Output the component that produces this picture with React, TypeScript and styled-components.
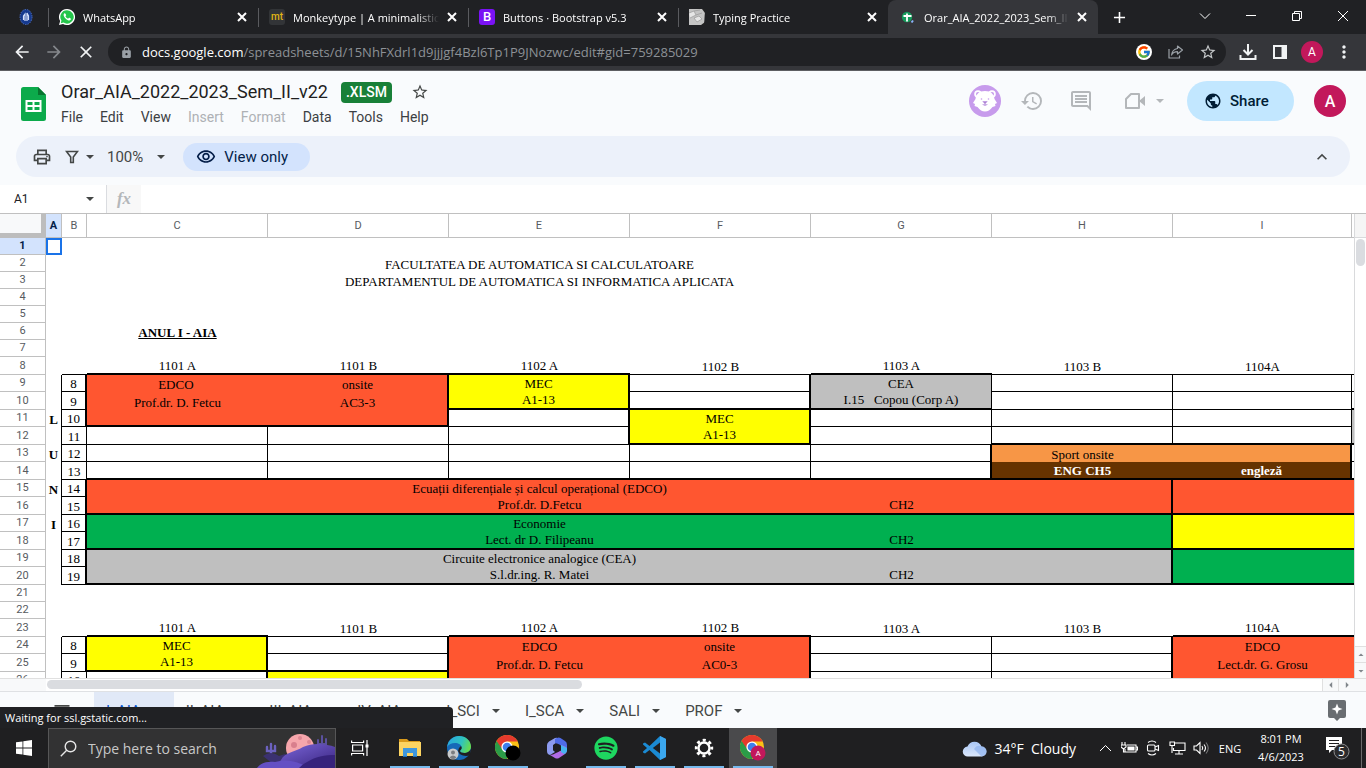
import React from 'react';
import styled, { createGlobalStyle, css } from 'styled-components';
import {
  MdArrowBack, MdArrowForward, MdClose, MdLock, MdStarBorder, MdMoreVert, MdAdd, MdHistory,
  MdOutlineInsertComment, MdPublic, MdOutlinePrint, MdArrowDropDown, MdArrowDropUp, MdArrowLeft, MdArrowRight,
  MdOutlineVisibility, MdKeyboardArrowUp, MdMenu,
} from 'react-icons/md';
import { FcGoogle } from 'react-icons/fc';
import { FaSpotify } from 'react-icons/fa';

const UI = '"Open Sans", "Noto Sans", sans-serif';
const DOC = 'Roboto, "Liberation Sans", sans-serif';
const SERIF = '"Liberation Serif", serif';

const GlobalStyle = createGlobalStyle`
  * { box-sizing: border-box; }
  body { margin: 0; overflow: hidden; }
  button, input { font: inherit; color: inherit; border: 0; padding: 0; margin: 0; background: none; }
  svg { display: block; flex: none; }
`;

const Shell = styled.div`
  display: flex;
  flex-direction: column;
  height: 100vh;
  background: #f9fbfd;
  font-family: ${DOC};
`;

/* ---------- browser frame ---------- */

const TabStrip = styled.div`
  display: flex;
  flex: none;
  height: 34px;
  background: #202124;
  color: #fff;
  font-family: ${UI};
  font-size: 11px;
`;
const PinnedTab = styled.button`
  width: 48px;
  padding: 0 6px 0 18px;
`;
const BrowserTab = styled.div<{ $active?: boolean }>`
  display: flex;
  align-items: center;
  flex: 0 1 210px;
  min-width: 0;
  padding: 0 11px;
  gap: 8px;
  position: relative;
  ${p => p.$active
    ? css`
        background: #35363a;
        border-radius: 8px 8px 0 0;
        padding-left: 12px;
      `
    : css`
        &::before {
          content: '';
          position: absolute;
          left: 0;
          top: 8px;
          height: 19px;
          width: 1px;
          background: #5a5b5f;
        }
      `}
`;
const TabTitle = styled.span`
  flex: 1;
  overflow: hidden;
  white-space: nowrap;
  mask-image: linear-gradient(90deg, #000 85%, transparent);
`;
const IconButton = styled.button<{ $w?: number; $color?: string }>`
  display: flex;
  align-items: center;
  justify-content: center;
  flex: none;
  width: ${p => p.$w ?? 32}px;
  color: ${p => p.$color ?? 'inherit'};
`;
const Spacer = styled.div`
  flex: 1;
`;
const AddressRow = styled.div`
  display: flex;
  flex: none;
  align-items: center;
  height: 37px;
  padding: 0 6px;
  background: #35363a;
  border-bottom: 1px solid #5d5e62;
  color: #f1f3f4;
  font-family: ${UI};
`;
const Omnibox = styled.div`
  display: flex;
  align-items: center;
  flex: 1;
  height: 28px;
  margin: 0 6px;
  padding: 0 2px 0 12px;
  border-radius: 14px;
  background: #202124;
  font-size: 13px;
  color: #9aa0a6;
`;
const UrlText = styled.a`
  flex: 1;
  margin-left: 9px;
  overflow: hidden;
  white-space: nowrap;
  color: #8d9196;
  text-decoration: none;
  b {
    font-weight: 400;
    color: #fff;
  }
`;
const Avatar = styled.button<{ $size: number }>`
  flex: none;
  width: ${p => p.$size}px;
  height: ${p => p.$size}px;
  border-radius: 50%;
  background: #c2185b;
  color: #fff;
  font-family: ${DOC};
  font-size: ${p => (p.$size > 24 ? 16 : 12)}px;
  font-weight: ${p => (p.$size > 24 ? 500 : 400)};
`;

/* ---------- document header ---------- */

const DocHeader = styled.header`
  display: flex;
  flex: none;
  height: 65px;
  padding: 10px 20px 0 21px;
`;
const LogoBox = styled.div`
  padding-top: 6px;
`;
const DocInfo = styled.div`
  margin-left: 7px;
`;
const TitleRow = styled.div`
  display: flex;
  align-items: center;
  height: 22px;
  padding-left: 8px;
`;
const DocTitle = styled.h1`
  margin: 0;
  font-size: 18px;
  line-height: 22px;
  font-weight: 400;
  color: #1f1f1f;
`;
const FileBadge = styled.span`
  margin: 0 16px 0 13px;
  padding: 0 5px;
  border-radius: 4px;
  background: #188038;
  color: #fff;
  font-size: 14px;
  font-weight: 500;
  line-height: 21px;
`;
const Menus = styled.nav`
  display: flex;
  gap: 1px;
  height: 28px;
`;
const MenuItem = styled.button`
  padding: 0 8px;
  font-size: 14px;
  color: #3c4043;
  &:disabled { color: #aeb1b5; }
`;
const HeaderActions = styled.div`
  display: flex;
  align-items: center;
  height: 40px;
  color: #b4b7ba;
`;
const ShareButton = styled.button`
  display: flex;
  align-items: center;
  gap: 8px;
  width: 107px;
  height: 40px;
  margin: 0 20px 0 22px;
  padding-left: 17px;
  border-radius: 20px;
  background: #c2e7ff;
  color: #001d35;
  font-size: 15px;
  font-weight: 500;
`;
const ToolPill = styled.div`
  display: flex;
  flex: none;
  align-items: center;
  height: 41px;
  margin: 0 16px 8px;
  padding: 0 12px 0 10px;
  border-radius: 21px;
  background: #ecf1fa;
  color: #444746;
  font-size: 15px;
`;
const ZoomButton = styled.button`
  display: flex;
  align-items: center;
  gap: 13px;
  margin: 0 17px 0 12px;
`;
const ViewOnly = styled.button`
  display: flex;
  align-items: center;
  gap: 8px;
  width: 127px;
  height: 28px;
  padding-left: 13px;
  border-radius: 14px;
  background: #d3e3fd;
  color: #041e49;
`;
const FormulaBar = styled.div`
  display: flex;
  flex: none;
  align-items: center;
  height: 29px;
  background: #fff;
  border-bottom: 1px solid #c0c0c0;
`;
const NameBox = styled.input`
  width: 78px;
  padding-left: 14px;
  font-size: 12px;
  color: #202124;
`;
const FxCell = styled.label`
  display: flex;
  align-items: center;
  justify-content: center;
  width: 35px;
  height: 28px;
  margin-left: 4px;
  border-left: 1px solid #dadce0;
  background: #f8f8f8;
  font: italic 700 17px ${SERIF};
  color: #b4b7ba;
`;
const FormulaInput = styled.input`
  flex: 1;
  height: 26px;
  padding: 0 8px;
`;

/* ---------- sheet ---------- */

const SheetArea = styled.main`
  display: flex;
  flex: 1 1 0;
  min-height: 0;
  background: #fff;
`;
const Viewport = styled.div`
  flex: 1;
  min-width: 0;
  overflow: hidden;
`;
const Sheet = styled.table`
  table-layout: fixed;
  width: 1533px;
  border-collapse: separate;
  border-spacing: 0;
`;
const headerCell = css<{ $on?: boolean }>`
  padding: 0;
  border: 0 solid #c0c0c0;
  border-right-width: 1px;
  border-bottom-width: 1px;
  background: ${p => (p.$on ? '#d3e3fd' : '#fff')};
  color: ${p => (p.$on ? '#041e49' : '#575b5f')};
  font-size: 11px;
  font-weight: ${p => (p.$on ? 700 : 400)};
  line-height: 14px;
`;
const ColHead = styled.th<{ $on?: boolean }>`
  ${headerCell}
  height: 24px;
`;
const RowHead = styled.th<{ $on?: boolean }>`
  ${headerCell}
`;
const Corner = styled.th`
  height: 24px;
  padding: 0;
  border: 0 solid #bdbdbd;
  border-width: 0 5px 5px 0;
  background: #f8f9fa;
`;
const Row = styled.tr<{ $h: number }>`
  height: ${p => p.$h}px;
`;
interface CellLook {
  $bg?: string;
  $color?: string;
  $bold?: boolean;
  $right: number;
  $bottom: number;
  $selected?: boolean;
}
const Cell = styled.td<CellLook>`
  padding: 0;
  vertical-align: bottom;
  border: 0 solid #000;
  border-right-width: ${p => p.$right}px;
  border-bottom-width: ${p => p.$bottom}px;
  background: ${p => p.$bg ?? 'transparent'};
  color: ${p => p.$color ?? '#000'};
  font-family: ${SERIF};
  font-size: 13px;
  font-weight: ${p => (p.$bold ? 700 : 400)};
  ${p => p.$selected && css`
    outline: 2px solid #1a73e8;
    outline-offset: -2px;
  `}
`;
const CellLine = styled.div<{ $tall?: boolean }>`
  display: flex;
  justify-content: center;
  height: ${p => (p.$tall ? 16 : 15)}px;
  line-height: ${p => (p.$tall ? 16 : 15)}px;
  white-space: pre;
`;
const Underlined = styled.u`
  font-weight: 700;
`;

const VScroll = styled.div`
  display: flex;
  flex: none;
  flex-direction: column;
  width: 12px;
  border-left: 1px solid #d9dadc;
`;
const VScrollHead = styled.div`
  height: 24px;
  background: #f5f5f5;
  border-bottom: 1px solid #d9dadc;
`;
const VThumb = styled.div`
  height: 27px;
  margin: 1px;
  border-radius: 5px;
  background: #dadce0;
`;
const ScrollStep = styled.button<{ $vertical?: boolean }>`
  display: flex;
  align-items: center;
  justify-content: center;
  flex: none;
  width: ${p => (p.$vertical ? 11 : 16)}px;
  height: ${p => (p.$vertical ? 16 : 12)}px;
  border: 0 solid #e0e0e0;
  border-width: ${p => (p.$vertical ? '1px 0 0' : '0 0 0 1px')};
  background: #f8f9fa;
  color: #80868b;
`;
const HScroll = styled.div`
  display: flex;
  flex: none;
  height: 13px;
  border-top: 1px solid #e0e0e0;
  background: #fff;
`;
const HScrollEdge = styled.div<{ $w: number }>`
  width: ${p => p.$w}px;
  background: #f8f9fa;
`;
const HTrack = styled.div`
  flex: 1;
  padding: 1px;
`;
const HThumb = styled.div`
  width: 42%;
  height: 9px;
  border-radius: 5px;
  background: #dadce0;
`;

/* ---------- sheet tabs ---------- */

const SheetTabs = styled.footer`
  position: relative;
  display: flex;
  flex: none;
  height: 37px;
  padding: 0 18px 0 50px;
  border-top: 1px solid #dfe1e4;
`;
const TabList = styled.div`
  display: flex;
  flex: 1;
  margin-left: 20px;
`;
const SheetTab = styled.button<{ $active?: boolean }>`
  display: flex;
  align-items: center;
  gap: 11px;
  padding: 2px 12px 0;
  font-size: 15px;
  color: ${p => (p.$active ? '#0b57d0' : '#444746')};
  background: ${p => (p.$active ? '#e1e9f7' : 'transparent')};
`;
const StatusBubble = styled.div`
  position: absolute;
  left: 0;
  bottom: 0;
  width: 453px;
  height: 21px;
  padding-left: 5px;
  border-radius: 0 4px 0 0;
  background: #202124;
  color: #fff;
  font: 11px/21px ${UI};
`;

/* ---------- taskbar ---------- */

const Taskbar = styled.div`
  display: flex;
  flex: none;
  height: 40px;
  background: #1f1f21;
  color: #fff;
  font-family: ${UI};
  font-size: 11px;
`;
const SearchBox = styled.label`
  display: flex;
  align-items: center;
  flex: none;
  width: 288px;
  padding-left: 11px;
  background: #323233;
  border: 1px solid #565657;
  border-bottom: 0;
  overflow: hidden;
`;
const SearchInput = styled.input`
  flex: 1;
  min-width: 0;
  margin-left: 11px;
  font-size: 14px;
  outline: 0;
  &::placeholder { color: #c8c8c8; opacity: 1; }
`;
const PinnedApps = styled.div`
  display: flex;
  gap: 1px;
  margin-left: 2px;
`;
const TaskButton = styled.button<{ $open?: boolean; $active?: boolean }>`
  display: flex;
  align-items: center;
  justify-content: center;
  flex: none;
  width: 48px;
  position: relative;
  background: ${p => (p.$active ? '#4a4a4c' : 'transparent')};
  ${p => p.$open && css`
    &::after {
      content: '';
      position: absolute;
      bottom: 0;
      left: 4px;
      right: 4px;
      height: 2px;
      background: #76b9ed;
    }
  `}
`;
const Weather = styled.button`
  display: flex;
  align-items: center;
  gap: 8px;
  margin-right: 17px;
  font-size: 14px;
  white-space: pre;
`;
const Clock = styled.div`
  width: 68px;
  padding-top: 2px;
  line-height: 18px;
  text-align: center;
`;
const Peek = styled.button`
  width: 5px;
  border-left: 1px solid #6a6a6b;
`;

/* ---------- small drawings ---------- */

const Caret = ({ color = 'currentColor' }: { color?: string }) => (
  <svg width="10" height="6" viewBox="0 0 10 6"><path d="M1 1h8L5 5z" fill={color} /></svg>
);

const CrestIcon = () => (
  <svg width="16" height="18" viewBox="0 0 16 18">
    <ellipse cx="8" cy="9" rx="6" ry="7.500" fill="#163a8f" stroke="#4d70c4" strokeWidth="1" strokeDasharray="1.5 1" />
    <path d="M5.500 12V8l1.500-2v7M9 13V5l1.500 3v4" stroke="#d5e0fa" strokeWidth="1.200" fill="none" />
  </svg>
);
const WhatsAppIcon = () => (
  <svg width="16" height="16" viewBox="0 0 32 32">
    <path d="M16 0a16 16 0 0 0-13.700 24.200L0 32l8-2.200A16 16 0 1 0 16 0z" fill="#fff" />
    <path d="M16 2.600a13.300 13.300 0 0 0-11.200 20.500L3.600 28.400l5.400-1.300A13.300 13.300 0 1 0 16 2.600z" fill="#25c54b" />
    <path d="M11.500 8.500c-.6 0-2.700 1.300-2.200 4.200.8 4.300 6 9.500 10.300 10.300 2.500.4 4.300-1.500 4.300-3.300 0-.6-3.300-2.200-3.900-2-.6.200-1.300 1.900-1.900 1.800-1.700-.3-4.700-3.200-5.100-4.800-.1-.6 1.300-1.400 1.400-2 .1-.7-1.600-4.200-2.900-4.200z" fill="#fff" />
  </svg>
);
const LetterIcon = styled.span<{ $bg: string; $fg: string; $size: number }>`
  flex: none;
  width: 16px;
  height: 16px;
  border-radius: 3px;
  background: ${p => p.$bg};
  color: ${p => p.$fg};
  font: 500 ${p => p.$size}px/16px ${DOC};
  text-align: center;
`;
const TypingIcon = () => (
  <svg width="16" height="16" viewBox="0 0 16 16">
    <path d="M0 0h14l2 2-1 14H0z" fill="#c4c4c4" />
    <path d="M0 4l5-2 2 4-6 3M7 6l6-2M5 2l6-1M5 9l5-2 3 3-5 3z" stroke="#989898" strokeWidth=".7" fill="#e6e6e6" />
    <path d="M13 0h3v4zM12 16l4-3v3z" fill="#222" />
  </svg>
);
const SheetsLoadingIcon = () => (
  <svg width="16" height="16" viewBox="0 0 16 16">
    <circle cx="7" cy="8" r="5.200" fill="#159a5b" />
    <path d="M3.500 7h8M7 4.500v8" stroke="#fff" strokeWidth="1.800" />
    <path d="M11.500 13.500l1.500-2" stroke="#8ab4f8" strokeWidth="2" />
  </svg>
);
const SheetsLogo = () => (
  <svg width="25" height="34" viewBox="0 0 25 34">
    <path d="M2.500 0H17l8 8v23.500a2.500 2.500 0 0 1-2.500 2.500h-20A2.500 2.500 0 0 1 0 31.500v-29A2.500 2.500 0 0 1 2.500 0z" fill="#0caa4b" />
    <path d="M17 0l8 8h-8z" fill="#07752f" />
    <path d="M4.500 13h16v12h-16zm2 2v3h5v-3zm7 0v3h5v-3zm-7 5v3h5v-3zm7 0v3h5v-3z" fill="#fff" fillRule="evenodd" />
  </svg>
);
const BearIcon = () => (
  <svg width="32" height="32" viewBox="0 0 32 32">
    <circle cx="16" cy="16" r="16" fill="#c79bec" />
    <circle cx="9" cy="9" r="3.800" fill="#fff" /><circle cx="23" cy="9" r="3.800" fill="#fff" />
    <circle cx="9" cy="9" r="2" fill="#c79bec" /><circle cx="23" cy="9" r="2" fill="#c79bec" />
    <path d="M16 6c6 0 9 3.500 9.500 8L28 18l-2 1 .5 2-3 1C21 25 19 26.500 16 26.500S11 25 8.500 22l-3-1 .5-2-2-1 2.500-4C7 9.500 10 6 16 6z" fill="#fff" />
    <circle cx="12.500" cy="14" r=".8" fill="#c79bec" /><circle cx="19.500" cy="14" r=".8" fill="#c79bec" />
    <path d="M13.800 16.500h4.400L16 18.800zM16 18v2M13.500 19.500l2.500 1 2.500-1" fill="#a77fcb" stroke="#b88be0" strokeWidth=".6" />
  </svg>
);
const MeetIcon = () => (
  <svg width="22" height="18" viewBox="0 0 22 18">
    <path d="M7 2h8v14H2V7z" fill="none" stroke="currentColor" strokeWidth="2" strokeLinejoin="round" />
    <path d="M15 9l6-5v10z" fill="currentColor" />
  </svg>
);
const FilterIcon = () => (
  <svg width="14" height="14" viewBox="0 0 14 14">
    <path d="M1.500 1.500h11L8.300 7v5.500H5.700V7z" fill="none" stroke="currentColor" strokeWidth="1.600" />
  </svg>
);
const OmniShareIcon = () => (
  <svg width="16" height="14" viewBox="0 0 16 14" fill="none" stroke="#9aa0a6" strokeWidth="1.200">
    <path d="M1 4v9h10.500v-2.500M9.500 1l5 4-5 4V6.700C6.500 6.700 4.500 8 3.500 10c.5-3.500 2.500-6 6-6.500z" strokeLinejoin="round" />
  </svg>
);
const DownloadIcon = () => (
  <svg width="18" height="16" viewBox="0 0 18 16" fill="none" stroke="#f1f3f4" strokeWidth="2">
    <path d="M9 0v10M4.500 6L9 10.500 13.500 6M1.500 11v4h15v-4" />
  </svg>
);
const SidePanelIcon = () => (
  <svg width="14" height="14" viewBox="0 0 14 14"><path d="M1 1h12v12H1z" fill="none" stroke="#f1f3f4" strokeWidth="2" /><path d="M8.500 1H13v12H8.500z" fill="#f1f3f4" /></svg>
);
const ThinIcon = ({ d, size = 12, w = 1 }: { d: string; size?: number; w?: number }) => (
  <svg width={size} height={size} viewBox={`0 0 ${size} ${size}`} fill="none" stroke="currentColor" strokeWidth={w}><path d={d} /></svg>
);
const ExploreIcon = () => (
  <svg width="18" height="21" viewBox="0 0 18 21">
    <path d="M2 0h14a2 2 0 0 1 2 2v14a2 2 0 0 1-2 2h-4l-3 3-3-3H2a2 2 0 0 1-2-2V2a2 2 0 0 1 2-2z" fill="#696d71" />
    <path d="M9 3.500l1.500 4L14.500 9l-4 1.500L9 14.500l-1.500-4-4-1.500 4-1.500z" fill="#fff" />
  </svg>
);
const WindowsIcon = () => (
  <svg width="16" height="16" viewBox="0 0 16 16"><path d="M0 2.300l6.500-.9v6.200H0zM7.300 1.300L16 0v7.600H7.300zM0 8.400h6.500v6.200L0 13.700zM7.300 8.400H16V16l-8.700-1.200z" fill="#fff" /></svg>
);
const SearchIcon = () => (
  <svg width="17" height="17" viewBox="0 0 17 17" fill="none" stroke="#e6e6e6" strokeWidth="1.400"><circle cx="10.500" cy="6.500" r="5.300" /><path d="M6.700 10.300L.8 16.200" /></svg>
);
const DesertArt = () => (
  <svg width="80" height="39" viewBox="0 0 80 39">
    <defs>
      <linearGradient id="hill" x1="0" y1="0" x2="1" y2="1"><stop offset="0" stopColor="#7d69dc" /><stop offset="1" stopColor="#38237e" /></linearGradient>
    </defs>
    <circle cx="45" cy="19" r="14" fill="#f6a6ac" />
    <circle cx="39" cy="16" r="3" fill="#d97f8d" /><circle cx="49" cy="22" r="3.500" fill="#dd8793" /><circle cx="45" cy="9" r="2" fill="#dd8793" /><circle cx="54" cy="13" r="2" fill="#dd8793" />
    <path d="M16 27V15M12 18v4h4M20 17v5h-4" stroke="#6c62c0" strokeWidth="2.400" fill="none" strokeLinecap="round" />
    <path d="M67 20V7M63 11v4h4M71 10v5h-4" stroke="#5b519f" strokeWidth="2" fill="none" strokeLinecap="round" />
    <path d="M8 27q8-6 16 0l6-2 6 4-18 6z" fill="#3b3170" />
    <path d="M26 31c4-8 14-8 22-13 10-5 24-3 32 0v21H20z" fill="url(#hill)" />
    <path d="M2 39c4-6 12-7 18-6 12-4 24 0 34 6z" fill="#6450c4" />
    <path d="M44 39c8-8 22-14 36-13v13z" fill="#36237c" />
  </svg>
);
const TaskViewIcon = () => (
  <svg width="18" height="16" viewBox="0 0 18 16" fill="none" stroke="#fff" strokeWidth="1.200">
    <path d="M.600.500v2h12v-2M1.600 5h10v6h-10zM.600 15.500v-2h12v2M16 0v16" /><path d="M14.500 6h3" strokeWidth="3" />
  </svg>
);
const FolderIcon = () => (
  <svg width="22" height="20" viewBox="0 0 22 20">
    <path d="M0 1h8l2 2h11v15H0z" fill="#d99a1b" /><path d="M0 4h22v14H0z" fill="#fcd462" />
    <path d="M4 10h14v9h-4v-4H8v4H4z" fill="#3f97dd" /><path d="M4 18h4v1H4zM14 18h4v1h-4z" fill="#1d72b8" />
  </svg>
);
const EdgeIcon = () => (
  <svg width="24" height="24" viewBox="0 0 24 24">
    <defs>
      <linearGradient id="edge" x1="0" y1="0.200" x2="1" y2="0.500"><stop offset="0" stopColor="#2aa6e0" /><stop offset=".6" stopColor="#2fc3bf" /><stop offset="1" stopColor="#66dc4f" /></linearGradient>
    </defs>
    <circle cx="12" cy="12" r="12" fill="#1669b8" />
    <path d="M.200 11C1 4 6 0 12 0c7 0 12 5 12 10.500 0 4-3 6.500-6.500 6.500-2.500 0-4.500-1-4.500-2 0-.7 1.500-1.500 1.500-3.500C14.500 8.500 11.500 7 8 7S1.500 8.500.200 11z" fill="url(#edge)" />
    <path d="M13 15c0 1 2 2 4.500 2 2.500 0 5-1.300 6.500-4l-1 6q-3 1.500-7 .5T11 15q0-3 3-5c2 3-1 4-1 5z" fill="#1f1f21" />
    <circle cx="6" cy="18" r="5.500" fill="#c8cacc" /><circle cx="6" cy="16.500" r="2" fill="#7b7d80" /><path d="M2.500 21.500q3.500-4 7 0-3.500 3-7 0z" fill="#7b7d80" />
  </svg>
);
const ChromeIcon = ({ badge }: { badge?: string }) => (
  <svg width="26" height="26" viewBox="0 0 26 26">
    <circle cx="12" cy="12" r="12" fill="#fbc116" />
    <path d="M12 12L1.600 6A12 12 0 0 0 12 24l5-9z" fill="#2b9c48" />
    <path d="M12 6.500h10.700L22.400 6A12 12 0 0 0 1.600 6l5.500 8z" fill="#e53a2d" />
    <circle cx="12" cy="12" r="5.600" fill="#fff" /><circle cx="12" cy="12" r="4.300" fill="#3f7fec" />
    <circle cx="18" cy="18" r="7.500" fill={badge ? '#c2185b' : '#000'} />
    {badge && <text x="18" y="21" fontSize="8" fontFamily="Roboto" fill="#fff" textAnchor="middle">{badge}</text>}
  </svg>
);
const M365Icon = () => (
  <svg width="20" height="22" viewBox="0 0 20 22">
    <path d="M8 1L2 4.500Q0 6 0 8v6q0 3.500 3 4l5-3-2-2V8l7-5q-2-3-5-2z" fill="#8d9bf0" />
    <path d="M8 2q4-3 7 0l3 2q2 1 2 4v6l-7-3V8L8 6z" fill="#4f6be6" />
    <path d="M20 12q0 4-2 5l-6 4q-2 1-4 0l-5-3q3 0 6-2l5-3V8l5 2z" fill="#b06be6" />
    <path d="M14 8l6 3v3q-1 3-3 3l-3-2z" fill="#46b4ee" />
    <path d="M6.500 8.500L10 6.500l4 2v5L10 15.500l-3.500-2z" fill="#1f1f21" />
  </svg>
);
const VsCodeIcon = () => (
  <svg width="24" height="24" viewBox="0 0 24 24">
    <path d="M17 0l6 3v18l-6 3L6.500 14 2 17.500 0 16.500v-1L4 12 0 8.500v-1l2-1L6.500 10z" fill="#1b8ad3" />
    <path d="M17 6.500L9.800 12l7.200 5.500z" fill="#1f1f21" /><path d="M17 0l6 3v18l-6 3z" fill="#3ba7ee" />
  </svg>
);
const GearIcon = () => (
  <svg width="20" height="20" viewBox="0 0 20 20">
    <circle cx="10" cy="10" r="5.500" fill="none" stroke="#fff" strokeWidth="2.400" />
    <circle cx="10" cy="10" r="7.800" fill="none" stroke="#fff" strokeWidth="2.800" strokeDasharray="3.063 3.063" strokeDashoffset="1.530" />
  </svg>
);
const CloudIcon = () => (
  <svg width="25" height="17" viewBox="0 0 25 17">
    <defs><linearGradient id="cloud" x1="0" y1="0" x2="0" y2="1"><stop offset="0" stopColor="#a9c6f5" /><stop offset="1" stopColor="#dbe7fb" /></linearGradient></defs>
    <path d="M6 16.500a5 5 0 0 1-.5-10A7.500 7.500 0 0 1 19.500 6.500 5 5 0 0 1 19.500 16.500z" fill="url(#cloud)" />
    <path d="M12 9a6 6 0 0 1 7.500-2.500 5 5 0 0 1 0 10z" fill="#8fb2ee" opacity=".7" />
  </svg>
);
const BatteryIcon = () => (
  <svg width="17" height="14" viewBox="0 0 17 14" fill="none" stroke="#fff" strokeWidth="1.100">
    <path d="M6 4h9v7H4V8M15 6h1.500v3H15M1 1v3M4 1v3M0 4h5v2L2.500 8 0 6zM2.500 8v3H4" /><path d="M7 6h6v3H7z" fill="#fff" />
  </svg>
);
const MeetNowIcon = () => (
  <svg width="14" height="16" viewBox="0 0 14 16" fill="none" stroke="#fff" strokeWidth="1.100">
    <rect x="1.500" y="5" width="7.500" height="6" rx="1" /><path d="M9 7l3.500-1.500v5L9 9M2 2.500q4-3 8 0M2 13.500q4 3 8 0" />
  </svg>
);
const NetworkIcon = () => (
  <svg width="17" height="14" viewBox="0 0 17 14" fill="none" stroke="#fff" strokeWidth="1.100">
    <path d="M6 2h10v7.500H4.500V7M10 9.500V13M6 13h8M1 1h4.500v3.500H1zM3 4.500V12" />
  </svg>
);
const SpeakerIcon = () => (
  <svg width="17" height="14" viewBox="0 0 17 14" fill="none" stroke="#fff" strokeWidth="1.100">
    <path d="M1 5h2.500L7 1.500v11L3.500 9H1zM9 5q1.500 2 0 4M11 3.500q3 3.500 0 7" /><path d="M13 1.500q4.500 5.500 0 11" stroke="#77787a" />
  </svg>
);
const NoticeIcon = () => (
  <svg width="24" height="24" viewBox="0 0 24 24">
    <path d="M0 1h16v13H6l-3 3v-3H0z" fill="#fff" /><path d="M3 4.500h10M3 7.500h10M3 10.500h6" stroke="#1f1f21" />
    <circle cx="15.500" cy="15.500" r="7.500" fill="#2b2b2d" stroke="#8d8d8f" />
    <text x="15.500" y="20" fontSize="12" fontFamily="Open Sans" fill="#fff" textAnchor="middle">5</text>
  </svg>
);

/* ---------- timetable data ---------- */

const RED = '#ff5630';
const YELLOW = '#ffff00';
const GREY = '#bfbfbf';
const GREEN = '#00b050';
const COLS = ['A', 'B', 'C', 'D', 'E', 'F', 'G', 'H', 'I', 'J'];
const COL_WIDTHS = [16, 25, 181, 181, 181, 181, 181, 181, 179, 181];
const ROW_HEIGHTS = [17, 17, 17, 17, 17, 17, 17, 18, 17, 18, 17, 18, 17, 18, 17, 18, 17, 18, 17, 18, 17, 17, 18, 17, 18, 17];

interface CellData {
  lines?: string[];
  bg?: string;
  color?: string;
  bold?: boolean;
  underline?: boolean;
  right?: number;
  bottom?: number;
  span?: number;
}
const cells: Record<string, CellData> = {};
const put = (refs: string, data: CellData) =>
  refs.split(' ').forEach(ref => { cells[ref] = { ...cells[ref], ...data }; });
const block = (cols: string, from: number, to: number, data: CellData) => {
  for (let r = from; r <= to; r++) [...cols].forEach(c => put(c + r, data));
};

block('BCDEFGHIJ', 9, 14, { right: 1, bottom: 1 });
block('BCDEFGHIJ', 24, 26, { right: 1, bottom: 1 });
block('B', 15, 20, { right: 2, bottom: 1 });
block('A', 9, 20, { right: 1 });
block('A', 24, 26, { right: 1 });
put('B8 F8 H8 I8 J8 B23 D23 G23 H23', { bottom: 1 });
put('C8 D8 E8 G8 C23 E23 F23 I23 J23', { bottom: 2 });

put('E2', { lines: ['FACULTATEA DE AUTOMATICA SI CALCULATOARE'] });
put('E3', { lines: ['DEPARTAMENTUL DE AUTOMATICA SI INFORMATICA APLICATA'] });
put('C6', { lines: ['ANUL I - AIA'], underline: true });
['1101 A', '1101 B', '1102 A', '1102 B', '1103 A', '1103 B', '1104A'].forEach((group, i) =>
  put(`${COLS[i + 2]}8 ${COLS[i + 2]}23`, { lines: [group] }));
for (let h = 8; h < 20; h++) put(`B${h + 1}`, { lines: [String(h)] });
for (let h = 8; h < 11; h++) put(`B${h + 16}`, { lines: [String(h)] });
[['A11', 'L'], ['A13', 'U'], ['A15', 'N'], ['A17', 'I'], ['A26', 'M']].forEach(([ref, letter]) =>
  put(ref, { lines: [letter], bold: true }));

block('B', 9, 11, { right: 2 });
block('C', 9, 11, { bg: RED, right: 0, bottom: 0 });
block('D', 9, 11, { bg: RED, right: 2, bottom: 0 });
put('C11 D11', { bottom: 2 });
put('C9', { lines: ['EDCO '] });
put('C10', { lines: ['Prof.dr. D. Fetcu'] });
put('D9', { lines: ['onsite'] });
put('D10', { lines: ['AC3-3'] });
put('E9', { lines: ['MEC', 'A1-13'], bg: YELLOW, span: 2, right: 2, bottom: 2 });
put('F9 F10 E11 E12 F11', { right: 2 });
put('F10', { bottom: 2 });
put('F11', { lines: ['MEC', 'A1-13'], bg: YELLOW, span: 2, bottom: 2 });
put('G9', { lines: ['CEA', 'I.15   Copou (Corp A)'], bg: GREY, span: 2, bottom: 2 });
put('H12 I12', { bottom: 2 });
put('G13 G14', { right: 2 });
put('H13 I13', { bg: '#f79646', bottom: 0, right: 0 });
put('H14 I14', { bg: '#663300', color: '#fff', bold: true, right: 0 });
put('I13 I14', { right: 2 });
put('H13', { lines: ['Sport onsite'] });
put('H14', { lines: ['ENG CH5'] });
put('I14', { lines: ['engleză'] });
put('J10', { bottom: 2 });
put('J11 J12', { bg: GREY, bottom: 0 });
put('J12', { bottom: 2 });
block('CDEFGHIJ', 14, 14, { bottom: 2 });

([
  [15, RED, RED, 'Ecuații diferențiale și calcul operațional (EDCO)', 'Prof.dr. D.Fetcu'],
  [17, GREEN, YELLOW, 'Economie', 'Lect. dr D. Filipeanu'],
  [19, GREY, GREEN, 'Circuite electronice analogice (CEA)', 'S.l.dr.ing. R. Matei'],
] as [number, string, string, string, string][]).forEach(([row, bg, nextBg, course, teacher]) => {
  [...'CDEFGH'].forEach(c => put(c + row, { bg, span: 2, bottom: 2 }));
  [...'IJ'].forEach(c => put(c + row, { bg: nextBg, span: 2, bottom: 2 }));
  put(`H${row}`, { right: 2 });
  put(`E${row}`, { lines: [course, teacher] });
  put(`G${row}`, { lines: ['', 'CH2'] });
});

put('B24 B25 D24 D25 D26 H24 H25 H26 C26', { right: 2 });
put('C24', { lines: ['MEC', 'A1-13'], bg: YELLOW, span: 2, right: 2, bottom: 2 });
put('D25', { bottom: 2 });
put('D26', { bg: YELLOW, lines: ['MEC'], bottom: 0 });
block('EI', 24, 26, { bg: RED, right: 0, bottom: 0 });
block('FJ', 24, 26, { bg: RED, right: 2, bottom: 0 });
put('E24 I24', { lines: ['EDCO'] });
put('E25', { lines: ['Prof.dr. D. Fetcu'] });
put('F24', { lines: ['onsite'] });
put('F25', { lines: ['AC0-3'] });
put('I25', { lines: ['Lect.dr. G. Grosu'] });

const isCovered = (col: string, row: number) => cells[`${col}${row - 1}`]?.span === 2;

const SheetCell = ({ col, row }: { col: string; row: number }) => {
  if (isCovered(col, row)) return null;
  const data = cells[`${col}${row}`] ?? {};
  return (
    <Cell
      rowSpan={data.span}
      $bg={data.bg}
      $color={data.color}
      $bold={data.bold}
      $right={data.right ?? 0}
      $bottom={data.bottom ?? 0}
      $selected={col === 'A' && row === 1}
    >
      {data.lines?.map((line, i) => (
        <CellLine key={i} $tall={data.span === 2}>
          {data.underline ? <Underlined>{line}</Underlined> : line}
        </CellLine>
      ))}
    </Cell>
  );
};

const Grid = () => (
  <Sheet>
    <colgroup>
      <col style={{ width: 46 }} />
      {COL_WIDTHS.map((w, i) => <col key={i} style={{ width: w }} />)}
    </colgroup>
    <thead>
      <tr>
        <Corner />
        {COLS.map(c => <ColHead key={c} scope="col" $on={c === 'A'}>{c === 'J' ? null : c}</ColHead>)}
      </tr>
    </thead>
    <tbody>
      {ROW_HEIGHTS.map((h, i) => (
        <Row key={i} $h={h}>
          <RowHead scope="row" $on={i === 0}>{i + 1}</RowHead>
          {COLS.map(c => <SheetCell key={c} col={c} row={i + 1} />)}
        </Row>
      ))}
    </tbody>
  </Sheet>
);

const browserTabs = [
  { title: 'WhatsApp', icon: <WhatsAppIcon /> },
  { title: 'Monkeytype | A minimalistic', icon: <LetterIcon $bg="#323437" $fg="#e2b714" $size={10}>mt</LetterIcon> },
  { title: 'Buttons · Bootstrap v5.3', icon: <LetterIcon $bg="#7a12f5" $fg="#fff" $size={13}>B</LetterIcon> },
  { title: 'Typing Practice', icon: <TypingIcon /> },
  { title: 'Orar_AIA_2022_2023_Sem_II', icon: <SheetsLoadingIcon />, active: true },
];
const menus = ['File', 'Edit', 'View', 'Insert', 'Format', 'Data', 'Tools', 'Help'];
const sheetNames = ['I_AIA', 'II_AIA', 'III_AIA', 'IV_AIA', 'I_SCI', 'I_SCA', 'SALI', 'PROF'];

export default function App() {
  return (
    <Shell>
      <GlobalStyle />
      <TabStrip>
        <PinnedTab aria-label="University"><CrestIcon /></PinnedTab>
        {browserTabs.map(t => (
          <BrowserTab key={t.title} $active={t.active}>
            {t.icon}
            <TabTitle>{t.title}</TabTitle>
            <IconButton $w={10} aria-label="Close tab"><ThinIcon d="M1 1l8 8M9 1l-8 8" size={10} w={2} /></IconButton>
          </BrowserTab>
        ))}
        <IconButton $w={42} aria-label="New tab"><MdAdd size={19} /></IconButton>
        <Spacer />
        <IconButton $w={46} aria-label="Search tabs"><ThinIcon d="M1 2.500l5 5 5-5" /></IconButton>
        <IconButton $w={46} aria-label="Minimize"><ThinIcon d="M1 4.500h10" /></IconButton>
        <IconButton $w={46} aria-label="Restore"><ThinIcon d="M1.500 2.500h7v7h-7zM3.500 2.500v-2h7v7h-2" /></IconButton>
        <IconButton $w={46} aria-label="Close"><ThinIcon d="M1 0l10 10M11 0L1 10" /></IconButton>
      </TabStrip>
      <AddressRow>
        <IconButton aria-label="Back"><MdArrowBack size={20} /></IconButton>
        <IconButton $color="#85888c" aria-label="Forward"><MdArrowForward size={20} /></IconButton>
        <IconButton aria-label="Stop"><MdClose size={20} /></IconButton>
        <Omnibox>
          <MdLock size={13} />
          <UrlText href="#"><b>docs.google.com</b>/spreadsheets/d/15NhFXdrl1d9jjjgf4Bzl6Tp1P9JNozwc/edit#gid=759285029</UrlText>
          <IconButton aria-label="Google">
            <svg width="16" height="16" viewBox="0 0 16 16"><circle cx="8" cy="8" r="8" fill="#fff" /><FcGoogle x="1" y="1" size={14} /></svg>
          </IconButton>
          <IconButton aria-label="Share page"><OmniShareIcon /></IconButton>
          <IconButton $color="#c4c7c9" aria-label="Bookmark"><MdStarBorder size={18} /></IconButton>
        </Omnibox>
        <IconButton aria-label="Downloads"><DownloadIcon /></IconButton>
        <IconButton aria-label="Side panel"><SidePanelIcon /></IconButton>
        <IconButton as="div"><Avatar $size={22}>A</Avatar></IconButton>
        <IconButton aria-label="More"><MdMoreVert size={20} /></IconButton>
      </AddressRow>

      <DocHeader>
        <LogoBox><SheetsLogo /></LogoBox>
        <DocInfo>
          <TitleRow>
            <DocTitle>Orar_AIA_2022_2023_Sem_II_v22</DocTitle>
            <FileBadge>.XLSM</FileBadge>
            <IconButton $w={24} $color="#444746" aria-label="Star"><MdStarBorder size={18} /></IconButton>
          </TitleRow>
          <Menus>
            {menus.map(m => <MenuItem key={m} disabled={m === 'Insert' || m === 'Format'}>{m}</MenuItem>)}
          </Menus>
        </DocInfo>
        <Spacer />
        <HeaderActions>
          <IconButton $w={64} aria-label="Anonymous viewer"><BearIcon /></IconButton>
          <IconButton $w={30} aria-label="History"><MdHistory size={24} /></IconButton>
          <IconButton $w={68} aria-label="Comments"><MdOutlineInsertComment size={24} /></IconButton>
          <IconButton $w={40} aria-label="Join a call"><MeetIcon /></IconButton>
          <Caret />
          <ShareButton><MdPublic size={18} />Share</ShareButton>
          <Avatar $size={32}>A</Avatar>
        </HeaderActions>
      </DocHeader>
      <ToolPill>
        <IconButton aria-label="Print"><MdOutlinePrint size={20} /></IconButton>
        <IconButton $w={27} aria-label="Filter"><FilterIcon /></IconButton>
        <Caret />
        <ZoomButton>100%<Caret /></ZoomButton>
        <ViewOnly><MdOutlineVisibility size={20} />View only</ViewOnly>
        <Spacer />
        <IconButton aria-label="Hide menus"><MdKeyboardArrowUp size={20} /></IconButton>
      </ToolPill>
      <FormulaBar>
        <NameBox aria-label="Name box" defaultValue="A1" />
        <IconButton $w={24} $color="#444746" aria-label="Named ranges"><Caret /></IconButton>
        <FxCell htmlFor="formula">fx</FxCell>
        <FormulaInput id="formula" />
      </FormulaBar>

      <SheetArea>
        <Viewport><Grid /></Viewport>
        <VScroll>
          <VScrollHead />
          <VThumb />
          <Spacer />
          <ScrollStep $vertical aria-label="Scroll up"><MdArrowDropUp size={12} /></ScrollStep>
          <ScrollStep $vertical aria-label="Scroll down"><MdArrowDropDown size={12} /></ScrollStep>
        </VScroll>
      </SheetArea>
      <HScroll>
        <HScrollEdge $w={46} />
        <HTrack><HThumb /></HTrack>
        <ScrollStep aria-label="Scroll left"><MdArrowLeft size={14} /></ScrollStep>
        <ScrollStep aria-label="Scroll right"><MdArrowRight size={14} /></ScrollStep>
        <HScrollEdge $w={12} />
      </HScroll>
      <SheetTabs>
        <IconButton $w={24} $color="#444746" aria-label="All sheets"><MdMenu size={20} /></IconButton>
        <TabList>
          {sheetNames.map((n, i) => <SheetTab key={n} $active={i === 0}>{n}<Caret /></SheetTab>)}
        </TabList>
        <IconButton $w={22} aria-label="Explore"><ExploreIcon /></IconButton>
        <StatusBubble role="status">Waiting for ssl.gstatic.com...</StatusBubble>
      </SheetTabs>

      <Taskbar>
        <IconButton $w={48} aria-label="Start"><WindowsIcon /></IconButton>
        <SearchBox>
          <SearchIcon />
          <SearchInput aria-label="Search" placeholder="Type here to search" />
          <DesertArt />
        </SearchBox>
        <TaskButton aria-label="Task view"><TaskViewIcon /></TaskButton>
        <PinnedApps>
          <TaskButton $open aria-label="Files"><FolderIcon /></TaskButton>
          <TaskButton $open aria-label="Edge"><EdgeIcon /></TaskButton>
          <TaskButton $open aria-label="Chrome"><ChromeIcon /></TaskButton>
          <TaskButton aria-label="Microsoft 365"><M365Icon /></TaskButton>
          <TaskButton $open aria-label="Spotify"><FaSpotify size={24} color="#1ed760" /></TaskButton>
          <TaskButton $open aria-label="Code"><VsCodeIcon /></TaskButton>
          <TaskButton $open aria-label="Settings"><GearIcon /></TaskButton>
          <TaskButton $open $active aria-label="Chrome profile"><ChromeIcon badge="A" /></TaskButton>
        </PinnedApps>
        <Spacer />
        <Weather><CloudIcon />34°F  Cloudy</Weather>
        <IconButton $w={24} aria-label="Hidden icons"><ThinIcon d="M1 9l5.500-5.500L12 9" size={13} /></IconButton>
        <IconButton $w={24} aria-label="Battery"><BatteryIcon /></IconButton>
        <IconButton $w={24} aria-label="Meet now"><MeetNowIcon /></IconButton>
        <IconButton $w={24} aria-label="Network"><NetworkIcon /></IconButton>
        <IconButton $w={24} aria-label="Volume"><SpeakerIcon /></IconButton>
        <IconButton $w={34} aria-label="Language">ENG</IconButton>
        <Clock>8:01 PM<br />4/6/2023</Clock>
        <IconButton $w={46} aria-label="Notifications"><NoticeIcon /></IconButton>
        <Peek aria-label="Show desktop" />
      </Taskbar>
    </Shell>
  );
}
